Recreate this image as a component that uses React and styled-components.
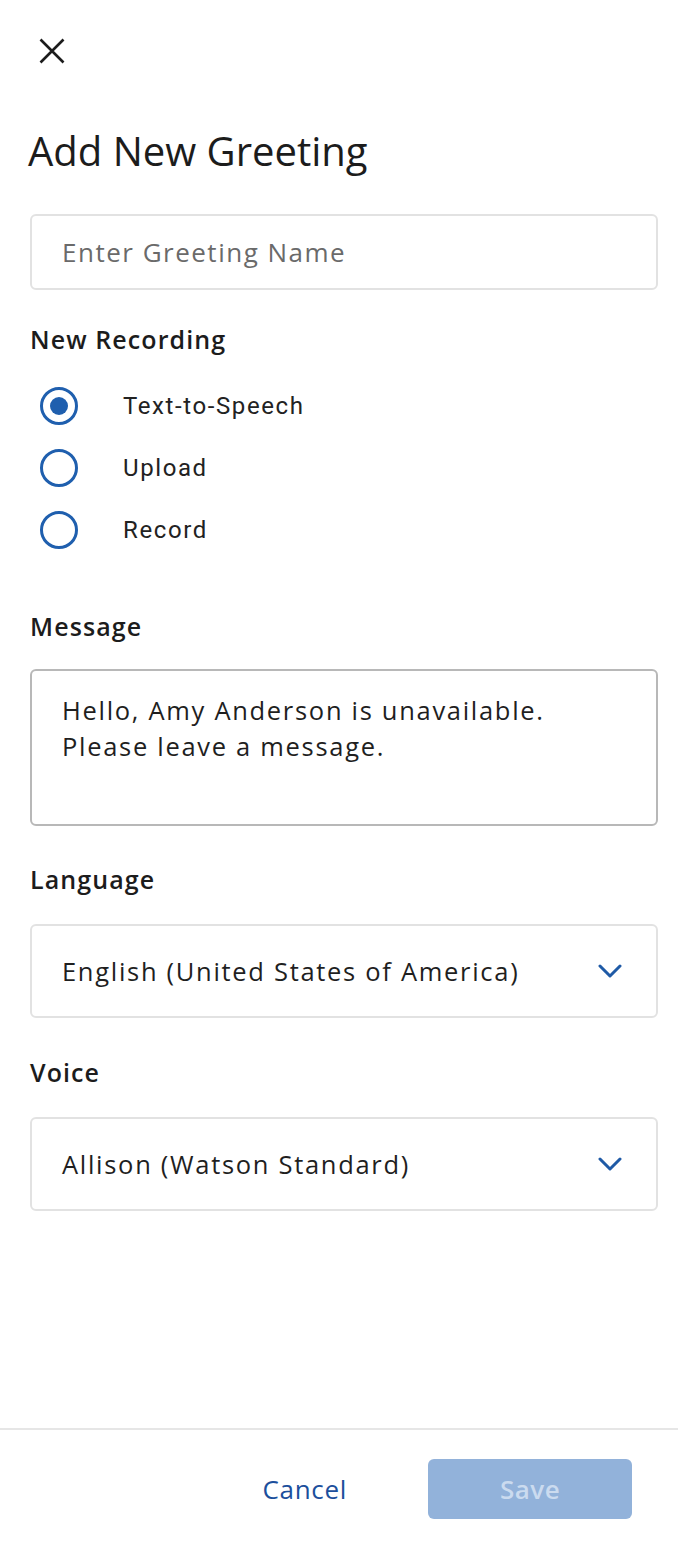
import React, { useState } from "react";
import styled, { createGlobalStyle } from "styled-components";

const GlobalStyle = createGlobalStyle`
  body {
    margin: 0;
    background: #ffffff;
    font-family: "Open Sans", "Noto Sans", sans-serif;
    color: #1f1f1f;
  }
  * {
    box-sizing: border-box;
  }
`;

const Screen = styled.div`
  display: flex;
  flex-direction: column;
  width: 678px;
  min-height: 1544px;
`;

const Content = styled.main`
  flex: 1;
  display: flex;
  flex-direction: column;
  padding: 38px 20px 0 30px;
`;

const CloseButton = styled.button`
  display: flex;
  align-items: center;
  justify-content: center;
  width: 26px;
  height: 26px;
  margin-left: 9px;
  padding: 0;
  border: none;
  background: none;
  color: #1c1c1c;
`;

const Title = styled.h1`
  margin: 62px 0 0 -2px;
  font-size: 40px;
  font-weight: 500;
  line-height: 50px;
  color: #1c1c1c;
`;

const TextField = styled.input`
  margin-top: 38px;
  width: 100%;
  height: 76px;
  padding: 0 30px;
  border: 2px solid #e2e2e2;
  border-radius: 6px;
  font-family: "Open Sans", sans-serif;
  font-size: 26px;
  letter-spacing: 1.5px;
  color: #1f1f1f;
  &::placeholder {
    color: #6a6a6a;
  }
`;

const Label = styled.div`
  margin-top: ${(p) => p.$top}px;
  font-size: 25px;
  font-weight: 600;
  line-height: 34px;
  letter-spacing: 1.1px;
  color: #1c1c1c;
`;

const RadioGroup = styled.div`
  display: flex;
  flex-direction: column;
  gap: 24px;
  margin-top: 31px;
  padding-left: 10px;
`;

const RadioRow = styled.label`
  display: flex;
  align-items: center;
  gap: 45px;
  height: 38px;
  cursor: pointer;
`;

const RadioCircle = styled.span`
  display: flex;
  align-items: center;
  justify-content: center;
  width: 38px;
  height: 38px;
  border: 3px solid #1f5fae;
  border-radius: 50%;
  &::after {
    content: "";
    display: ${(p) => (p.$checked ? "block" : "none")};
    width: 18px;
    height: 18px;
    border-radius: 50%;
    background: #1f5fae;
  }
`;

const RadioText = styled.span`
  font-family: Roboto, sans-serif;
  font-size: 24px;
  font-weight: 400;
  letter-spacing: 1.6px;
  color: #222222;
`;

const MessageBox = styled.div`
  margin-top: 26px;
  height: 157px;
  padding: 21px 30px;
  border: 2px solid #b8b8b8;
  border-radius: 6px;
  font-size: 25.5px;
  line-height: 36px;
  letter-spacing: 1.7px;
  color: #1f1f1f;
`;

const Select = styled.div`
  display: flex;
  align-items: center;
  justify-content: space-between;
  margin-top: 28px;
  height: 94px;
  padding: 0 34px 0 30px;
  border: 2px solid #e2e2e2;
  border-radius: 6px;
  font-size: 25.5px;
  letter-spacing: 1.7px;
  color: #1f1f1f;
`;

const Footer = styled.footer`
  display: flex;
  align-items: center;
  justify-content: flex-end;
  gap: 81px;
  height: 116px;
  padding: 4px 46px 0 0;
  border-top: 2px solid #e6e6e6;
`;

const CancelButton = styled.button`
  border: none;
  background: none;
  padding: 0;
  font-family: "Open Sans", sans-serif;
  font-size: 26px;
  letter-spacing: 0.7px;
  color: #1c4f9c;
`;

const SaveButton = styled.button`
  width: 204px;
  height: 60px;
  border: none;
  border-radius: 6px;
  background: #92b2da;
  font-family: "Open Sans", sans-serif;
  font-size: 26px;
  font-weight: 600;
  letter-spacing: 0.5px;
  color: #cbdbef;
`;

const Chevron = () => (
  <svg width="24" height="14" viewBox="0 0 24 14" fill="none">
    <path d="M2 2l10 10L22 2" stroke="#1f5aa6" strokeWidth="3" strokeLinecap="round" strokeLinejoin="round" />
  </svg>
);

const recordingTypes = ["Text-to-Speech", "Upload", "Record"];

export default function App() {
  const [type, setType] = useState("Text-to-Speech");

  return (
    <Screen>
      <GlobalStyle />
      <Content>
        <CloseButton aria-label="Close">
          <svg width="26" height="26" viewBox="0 0 26 26">
            <path d="M1.5 1.5l23 23M24.5 1.5l-23 23" stroke="#1c1c1c" strokeWidth="2.6" />
          </svg>
        </CloseButton>
        <Title>Add New Greeting</Title>
        <TextField placeholder="Enter Greeting Name" />

        <Label $top={32}>New Recording</Label>
        <RadioGroup>
          {recordingTypes.map((t) => (
            <RadioRow key={t} onClick={() => setType(t)}>
              <RadioCircle $checked={type === t} />
              <RadioText>{t}</RadioText>
            </RadioRow>
          ))}
        </RadioGroup>

        <Label $top={60}>Message</Label>
        <MessageBox>
          Hello, Amy Anderson is unavailable.
          <br />
          Please leave a message.
        </MessageBox>

        <Label $top={36}>Language</Label>
        <Select>
          <span>English (United States of America)</span>
          <Chevron />
        </Select>

        <Label $top={37}>Voice</Label>
        <Select>
          <span>Allison (Watson Standard)</span>
          <Chevron />
        </Select>
      </Content>
      <Footer>
        <CancelButton>Cancel</CancelButton>
        <SaveButton>Save</SaveButton>
      </Footer>
    </Screen>
  );
}
